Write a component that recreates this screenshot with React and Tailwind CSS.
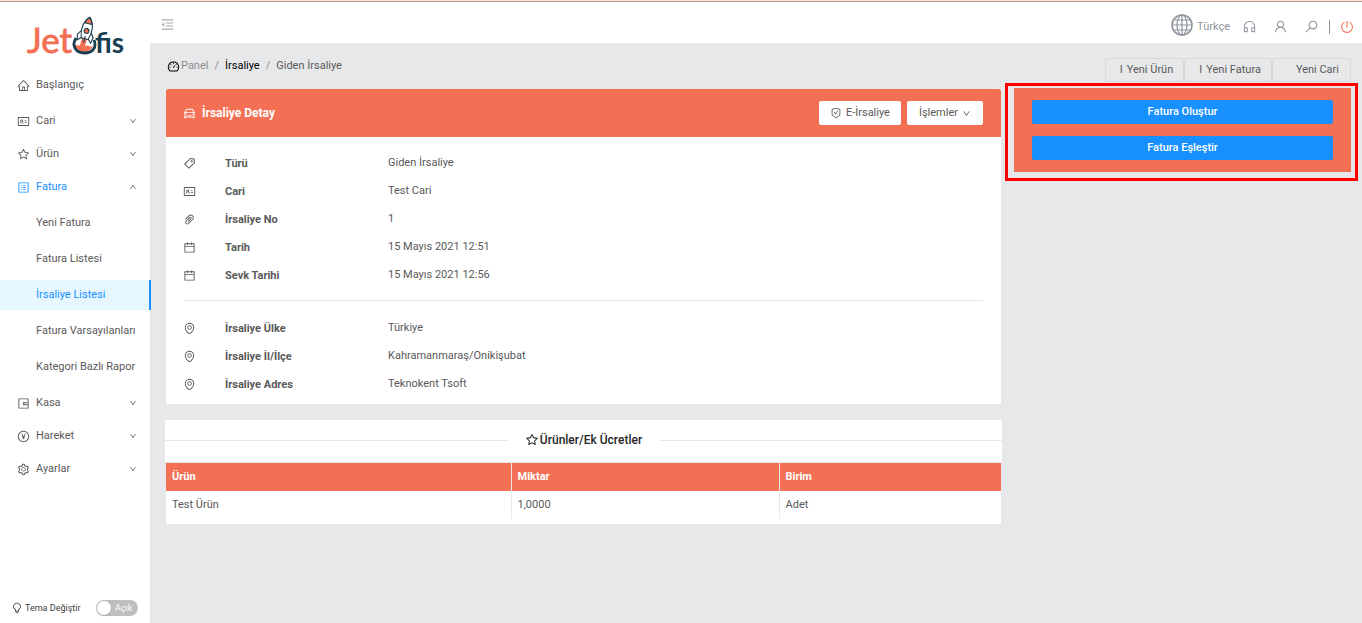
import { useState } from 'react'
import {
  AiOutlineMenuFold, AiOutlineHome, AiOutlineIdcard, AiOutlineStar, AiOutlineProfile, AiOutlineWallet,
  AiOutlinePayCircle, AiOutlineSetting, AiOutlineBulb, AiOutlineDashboard, AiOutlineCar, AiOutlineTag,
  AiOutlinePaperClip, AiOutlineCalendar, AiOutlineEnvironment, AiOutlineSafetyCertificate, AiOutlineDown,
  AiOutlineUp, AiOutlineCustomerService, AiOutlineUser, AiOutlineSearch, AiOutlinePoweroff,
} from 'react-icons/ai'

const menu = [
  { label: 'Başlangıç', icon: AiOutlineHome },
  { label: 'Cari', icon: AiOutlineIdcard, children: [] },
  { label: 'Ürün', icon: AiOutlineStar, children: [] },
  { label: 'Fatura', icon: AiOutlineProfile, children: ['Yeni Fatura', 'Fatura Listesi', 'İrsaliye Listesi', 'Fatura Varsayılanları', 'Kategori Bazlı Rapor'] },
  { label: 'Kasa', icon: AiOutlineWallet, children: [] },
  { label: 'Hareket', icon: AiOutlinePayCircle, children: [] },
  { label: 'Ayarlar', icon: AiOutlineSetting, children: [] },
]

const details = [
  { icon: AiOutlineTag, label: 'Türü', value: 'Giden İrsaliye' },
  { icon: AiOutlineIdcard, label: 'Cari', value: 'Test Cari' },
  { icon: AiOutlinePaperClip, label: 'İrsaliye No', value: '1' },
  { icon: AiOutlineCalendar, label: 'Tarih', value: '15 Mayıs 2021 12:51' },
  { icon: AiOutlineCalendar, label: 'Sevk Tarihi', value: '15 Mayıs 2021 12:56' },
]

const address = [
  { icon: AiOutlineEnvironment, label: 'İrsaliye Ülke', value: 'Türkiye' },
  { icon: AiOutlineEnvironment, label: 'İrsaliye İl/İlçe', value: 'Kahramanmaraş/Onikişubat' },
  { icon: AiOutlineEnvironment, label: 'İrsaliye Adres', value: 'Teknokent Tsoft' },
]

const products = [{ name: 'Test Ürün', amount: '1,0000', unit: 'Adet' }]

function Logo() {
  return (
    <svg viewBox="0 0 104 52" className="h-[52px] w-[104px] overflow-visible" role="img" aria-label="Jetofis">
      <text x="0" y="39" fontFamily="Lato, sans-serif" fontSize="35" fill="#f37055" stroke="#f37055" strokeWidth="0.8">Jet</text>
      <text x="68" y="39" fontFamily="Lato, sans-serif" fontSize="28" fontWeight="700" fill="#173f4f">fis</text>
      <path d="M48 31 C50 30 51 33 53 31 L55 24 L60 25 L58 32 C61 30 63 34 66 32 C64 36 61 38 57 38 C52 38 48 35 48 31 Z" fill="#f37055" />
      <path d="M49 24 C44 32 49 39 57.500 39 C66 39 70 33 67 26" fill="none" stroke="#173f4f" strokeWidth="2.800" />
      {/* rocket */}
      <g transform="rotate(14 60 15)" stroke="#173f4f" strokeWidth="1.100" strokeLinejoin="round">
        <path d="M55.500 17 L52 22 L53 28 L57 24 Z M64.500 17 L68 22 L67 28 L63 24 Z" fill="#ffffff" />
        <path d="M60 3 C54.500 8 53.500 17 56.500 25 L63.500 25 C66.500 17 65.500 8 60 3 Z" fill="#ffffff" />
        <path d="M60 3 C58 5 57 7 56.200 9.500 L63.800 9.500 C63 7 62 5 60 3 Z" fill="#f37055" />
        <circle cx="60" cy="17" r="2.400" fill="#f37055" />
        <path d="M60 22 L60 29" fill="none" />
      </g>
    </svg>
  )
}

function GlobeIcon() {
  return (
    <svg viewBox="0 0 22 22" className="size-[22px]" fill="none" stroke="#8f969d" strokeWidth="1.2">
      <circle cx="11" cy="11" r="10" strokeWidth="1.6" />
      <ellipse cx="11" cy="11" rx="5" ry="10" />
      <path d="M11 1V21M1 11H21M2.500 6H19.500M2.500 16H19.500" />
    </svg>
  )
}

function Sidebar() {
  const [open, setOpen] = useState('Fatura')
  const [active, setActive] = useState('İrsaliye Listesi')
  const [light, setLight] = useState(false)

  return (
    <aside className="flex w-[150px] shrink-0 flex-col bg-white">
      <a href="#" className="mt-3 mb-1 ml-[27px] block"><Logo /></a>
      <nav>
        <ul>
          {menu.map(({ label, icon: Icon, children }) => (
            <li key={label} className={children ? 'mb-[3px]' : 'mb-1.5'}>
              <button
                type="button"
                onClick={() => children && setOpen(open === label ? '' : label)}
                className={`flex h-[30px] w-full items-center pr-[13px] pl-[17px] ${open === label ? 'text-[#1890ff]' : 'text-[#595959]'}`}
              >
                <Icon className="mr-1.5 size-[13px]" />
                <span className="flex-1 text-left">{label}</span>
                {children && (open === label ? <AiOutlineUp className="size-2 text-[#595959]" /> : <AiOutlineDown className="size-2 text-[#595959]" />)}
              </button>
              {open === label && children.length > 0 && (
                <ul className="mt-1.5 mb-1.5 flex flex-col gap-1.5">
                  {children.map(c => (
                    <li key={c}>
                      <a
                        href="#"
                        onClick={() => setActive(c)}
                        className={`flex h-[30px] items-center pl-9 whitespace-nowrap ${active === c ? '-mr-px border-r-2 border-[#1890ff] bg-[#e6f7ff] text-[#1890ff]' : 'text-[#595959]'}`}
                      >
                        {c}
                      </a>
                    </li>
                  ))}
                </ul>
              )}
            </li>
          ))}
        </ul>
      </nav>
      <div className="mt-auto flex items-center pr-3 pb-[7px] pl-[11px] text-[9px] text-[#404040]">
        <AiOutlineBulb className="mr-0.5 size-3" />
        <span className="flex-1">Tema Değiştir</span>
        <button
          type="button"
          role="switch"
          aria-checked={light}
          aria-label="Tema Değiştir"
          onClick={() => setLight(!light)}
          className="flex h-4 w-[42px] items-center gap-1 rounded-full bg-[#bfbfbf] px-px text-white"
        >
          <span className="size-3.5 shrink-0 rounded-full bg-white shadow-sm"></span>
          Açık
        </button>
      </div>
    </aside>
  )
}

function Header() {
  return (
    <header className="flex h-[41px] items-center justify-between bg-white pt-1 pr-2 pl-2.5 text-[#8f969d]">
      <button type="button" aria-label="Menü" className="text-[#a9aeb3]"><AiOutlineMenuFold className="size-[15px]" /></button>
      <div className="flex items-center pt-1">
        <button type="button" className="-mt-1 flex items-center gap-1"><GlobeIcon /><span className="pt-1">Türkçe</span></button>
        <button type="button" aria-label="Destek" className="ml-3"><AiOutlineCustomerService className="size-[15px]" /></button>
        <button type="button" aria-label="Hesap" className="ml-4"><AiOutlineUser className="size-[15px]" /></button>
        <button type="button" aria-label="Ara" className="ml-4"><AiOutlineSearch className="size-[15px] -scale-x-100" /></button>
        <span className="mx-2.5 h-3.5 w-px bg-[#8f969d]"></span>
        <button type="button" aria-label="Çıkış" className="text-[#f37055]"><AiOutlinePoweroff className="size-3.5" /></button>
      </div>
    </header>
  )
}

function DetailList({ items }) {
  return (
    <dl>
      {items.map(({ icon: Icon, label, value }) => (
        <div key={label} className="flex h-7 items-center">
          <dt className="flex w-[205px] shrink-0 items-center font-bold">
            <Icon className="mr-[29px] size-[13px]" />
            <span className="pt-0.5">{label}</span>
          </dt>
          <dd>{value}</dd>
        </div>
      ))}
    </dl>
  )
}

export default function App() {
  return (
    <div className="flex min-h-screen flex-col bg-[#e7e8ea] font-['Roboto',sans-serif] text-[11px] leading-4 text-[#595959]">
      <div className="h-0.5 border-b border-[#b89a94] bg-[#fde3dc]"></div>
      <div className="flex flex-1">
        <Sidebar />
        <div className="min-w-0 flex-1">
          <Header />
          <main className="pr-1 pl-4">
            <div className="flex h-10 items-end justify-between pr-[7px]">
              <nav className="mb-[9px] flex items-center gap-1.5 pl-px text-[#8c8c8c]">
                <a href="#" className="flex items-center gap-px"><AiOutlineDashboard className="size-[13px] text-black" />Panel</a>
                <span>/</span>
                <a href="#" className="text-black">İrsaliye</a>
                <span>/</span>
                <span className="text-[#595959]">Giden İrsaliye</span>
              </nav>
              <div className="mb-px flex">
                <button type="button" className="flex h-6 items-center gap-1 rounded-xs border border-[#d9d9d9] pr-2.5 pl-3.5"><span>I</span>Yeni Ürün</button>
                <button type="button" className="flex h-6 items-center gap-1 rounded-xs border border-[#d9d9d9] pr-2.5 pl-3.5"><span>I</span>Yeni Fatura</button>
                <button type="button" className="h-6 rounded-xs border border-[#d9d9d9] pr-[11px] pl-[23px]">Yeni Cari</button>
              </div>
            </div>

            <div className="flex items-start gap-1">
              <div className="min-w-0 flex-1 pt-1.5">
                <section className="bg-white pb-1.5">
                  <div className="flex h-12 items-center gap-1.5 rounded-t-xs bg-[#f37055] pr-[18px] pl-[17px]">
                    <AiOutlineCar className="size-[13px] text-white" />
                    <h1 className="flex-1 text-xs font-bold text-white">İrsaliye Detay</h1>
                    <button type="button" className="flex h-6 items-center gap-1 rounded-xs bg-white px-[11px]"><AiOutlineSafetyCertificate className="size-3" />E-İrsaliye</button>
                    <button type="button" className="flex h-6 items-center gap-1 rounded-xs bg-white px-3">İşlemler<AiOutlineDown className="size-[9px]" /></button>
                  </div>
                  <div className="pt-3 pr-[18px] pl-[17px]">
                    <DetailList items={details} />
                    <hr className="mt-[11px] mb-[13px] ml-px border-[#e8e8e8]" />
                    <DetailList items={address} />
                  </div>
                </section>

                <section className="mt-4 bg-white pb-[5px]">
                  <h2 className="-mx-px flex h-[42px] items-center bg-white pb-0.5 text-xs font-medium text-[#262626]">
                    <span className="h-px flex-1 bg-[#e8e8e8]"></span>
                    <span className="flex items-center gap-px px-[17px]"><AiOutlineStar className="size-3.5" />Ürünler/Ek Ücretler</span>
                    <span className="h-px flex-1 bg-[#e8e8e8]"></span>
                  </h2>
                  <div className="border-t border-[#e8e8e8]">
                    <table className="w-full table-fixed text-left">
                      <thead className="bg-[#f37055] text-white">
                        <tr className="h-7">
                          <th className="w-[345px] border-r border-[#e8e8e8] px-1.5">Ürün</th>
                          <th className="w-[268px] border-r border-[#e8e8e8] px-1.5">Miktar</th>
                          <th className="px-1.5">Birim</th>
                        </tr>
                      </thead>
                      <tbody>
                        {products.map(p => (
                          <tr key={p.name} className="h-7">
                            <td className="border-r border-[#e8e8e8] px-1.5">{p.name}</td>
                            <td className="border-r border-[#e8e8e8] px-1.5">{p.amount}</td>
                            <td className="px-1.5">{p.unit}</td>
                          </tr>
                        ))}
                      </tbody>
                    </table>
                  </div>
                </section>
              </div>

              <div className="w-[353px] shrink-0 border-3 border-[#ff0000] pt-0.5 pr-1 pb-1.5 pl-1.5">
                <div className="flex flex-col gap-3 bg-[#f37055] px-[18px] py-3 text-white">
                  <button type="button" className="h-6 rounded-xs bg-[#1890ff] font-medium">Fatura Oluştur</button>
                  <button type="button" className="h-6 rounded-xs bg-[#1890ff] font-medium">Fatura Eşleştir</button>
                </div>
              </div>
            </div>
          </main>
        </div>
      </div>
    </div>
  )
}
